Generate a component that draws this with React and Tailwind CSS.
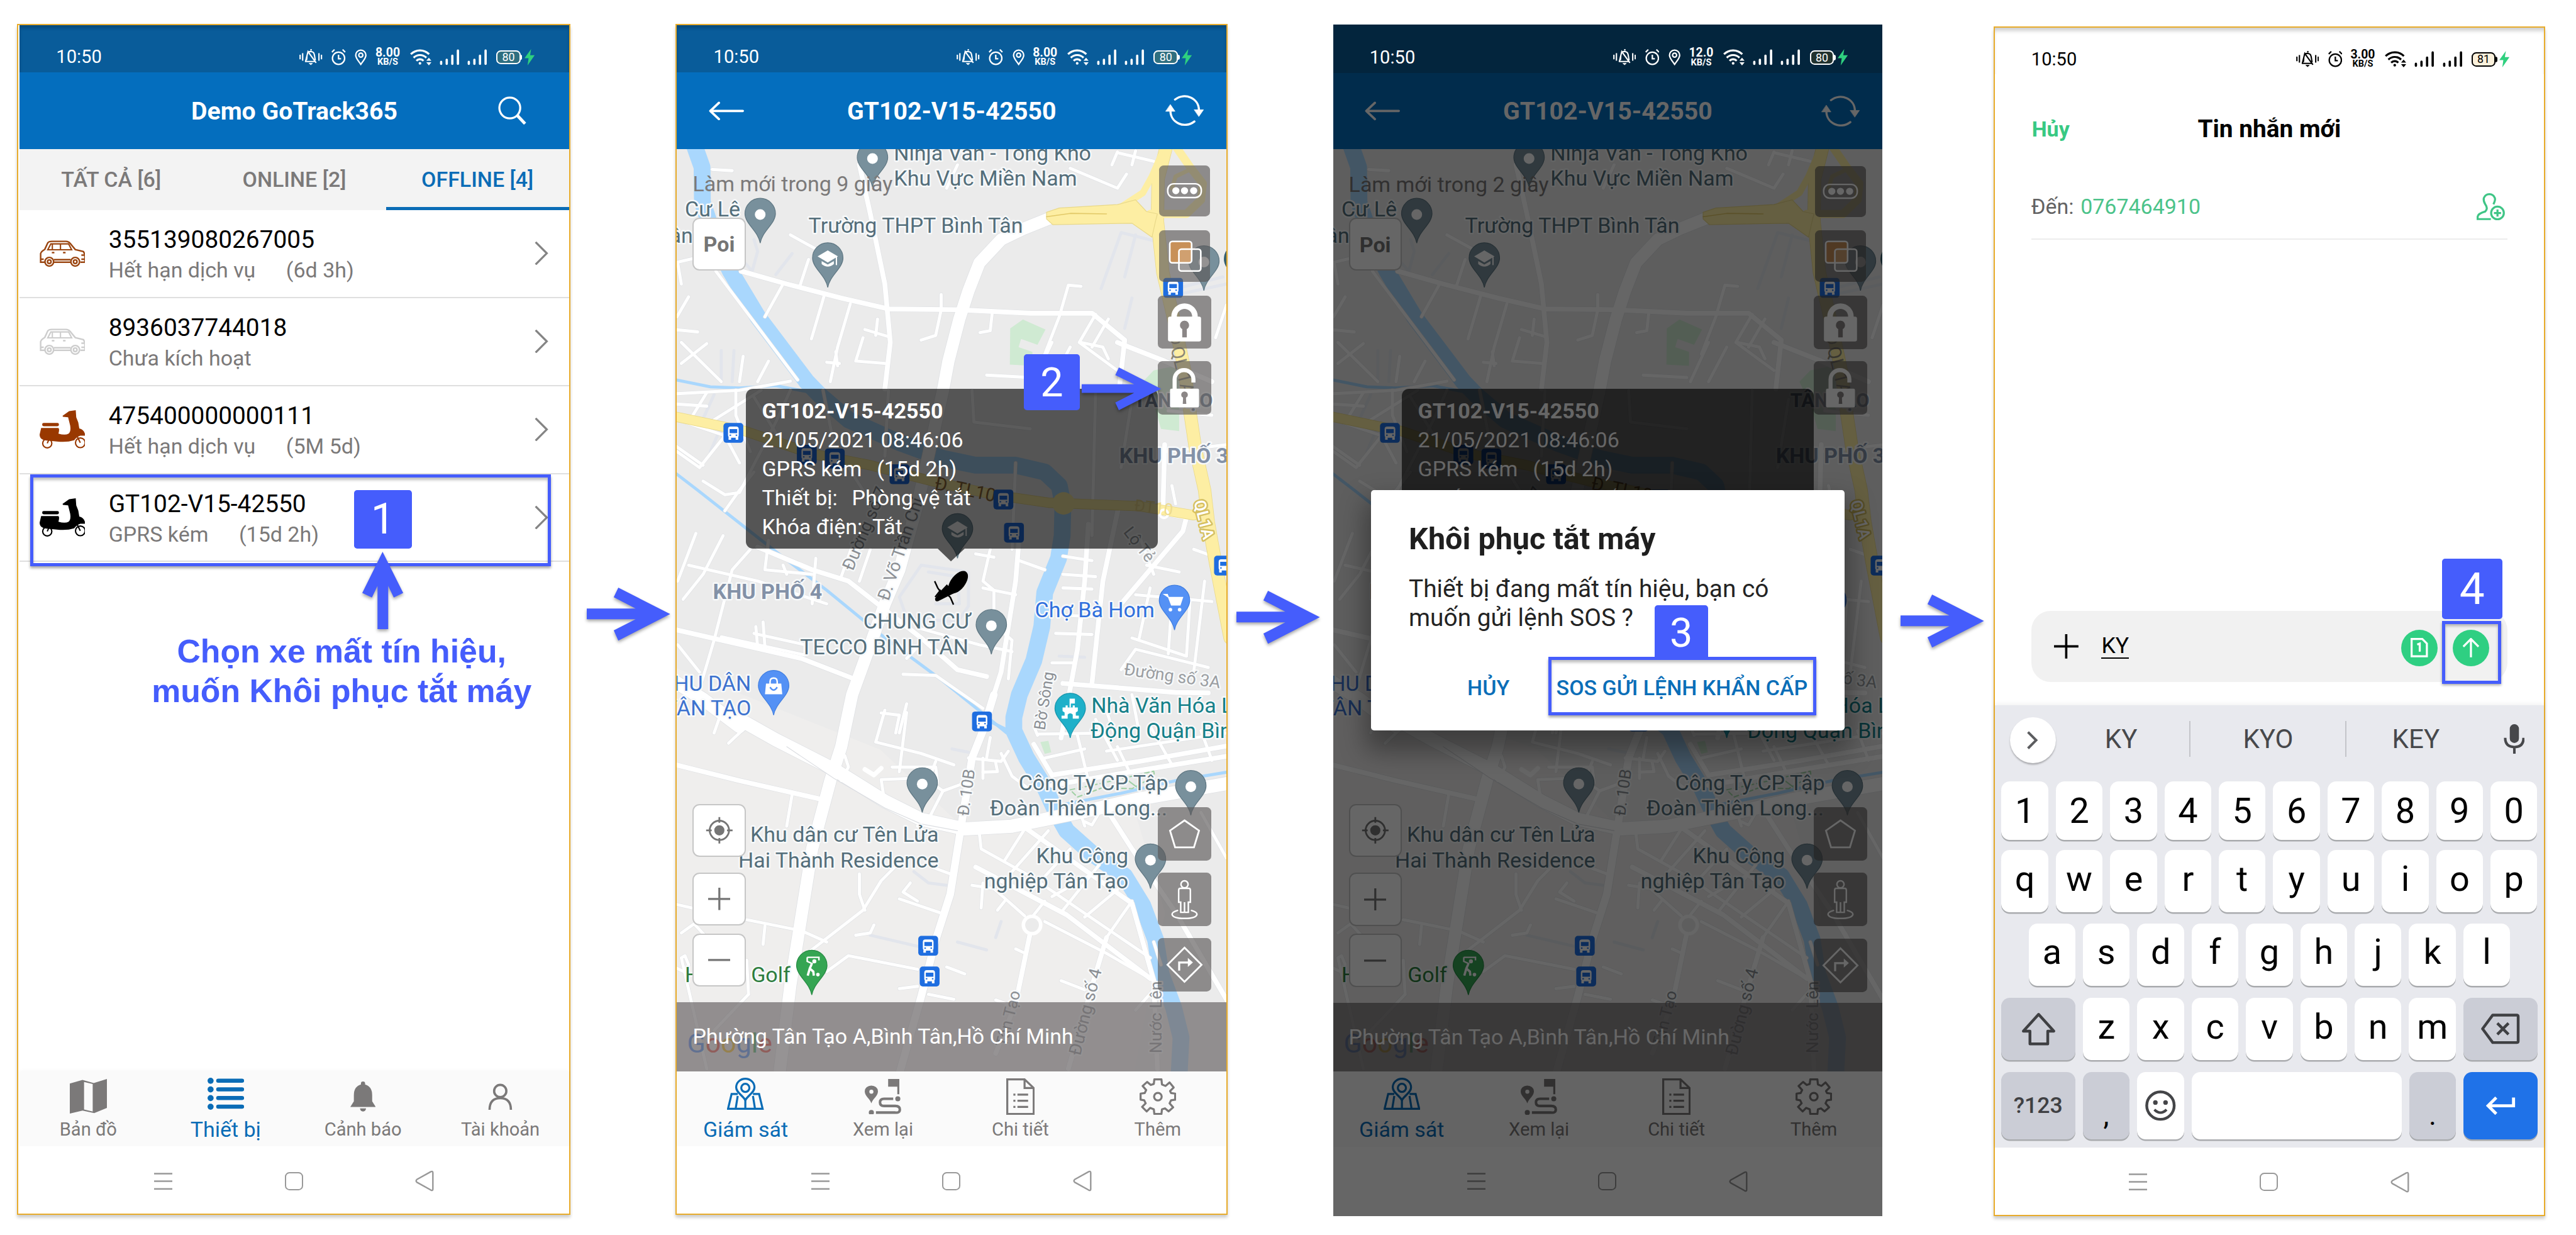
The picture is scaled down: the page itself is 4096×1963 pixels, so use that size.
import React from "react";

/* ---------- shared glyphs ---------- */

const ArrowRight = ({ className }) => (
  <svg className={className} width="164" height="106" viewBox="0 0 164 106" fill="#455dfc">
    <path d="M0 41H96L53 19L62 0L164 52L62 104L53 84L96 62H0Z" />
  </svg>
);

const Badge = ({ className, children }) => (
  <div className={"flex items-center justify-center rounded-[6px] bg-[#455dfc] text-white " + className}>{children}</div>
);

function StatusBar({ className, speed, level, pin = true, fill }) {
  return (
    <div className={"flex shrink-0 items-end " + className}>
      <div className="flex h-[60px] w-full items-center pl-[72px] pr-[68px]">
        <span className="text-[36px] leading-none">10:50</span>
        <svg className="ml-auto" width="45" height="32" viewBox="0 0 45 32" fill="none" stroke="currentColor" strokeWidth="2.6">
          <path d="M1.500 11v9M6.500 8v15M38.500 8v15M43.500 11v9" />
          <path d="M14 22c1-3 1-5 1-9M17.500 7c1.500-3 9-3 11 1s1.500 10 3 14M11 24.500H31M23 3V0M12 25L17 5L33 27" />
          <path d="M19 28h7l-3.500 3z" fill="currentColor" strokeWidth="1" />
        </svg>
        <svg className="ml-[18px]" width="28" height="32" viewBox="0 0 28 32" fill="none" stroke="currentColor" strokeWidth="2.8">
          <circle cx="14" cy="18" r="12" />
          <path d="M14 11v8h5M1 6l5-5M27 6l-5-5" />
        </svg>
        {pin && (
          <svg className="ml-[18px]" width="24" height="32" viewBox="0 0 24 32" fill="none" stroke="currentColor" strokeWidth="2.8">
            <path d="M12 30C8 24 2 18 2 12a10 10 0 0 1 20 0c0 6-6 12-10 18z" />
            <circle cx="12" cy="12" r="4" />
          </svg>
        )}
        <span className="ml-[16px] flex w-[49px] flex-col items-center font-bold">
          <span className="text-[24px] leading-[20px]">{speed}</span>
          <span className="text-[18px] leading-[17px]">KB/S</span>
        </span>
        <svg className="ml-[19px]" width="42" height="32" viewBox="0 0 42 32" fill="none" stroke="currentColor" strokeWidth="4">
          <path d="M1.500 10c10-10 26-10 36 0M7 17c7-7 18-7 25 0M12.500 23c4-4 10-4 14 0" />
          <circle cx="19.500" cy="28" r="2.600" fill="currentColor" stroke="none" />
          <path d="M32 23l5-6 5 6zM32 26l5 6 5-6z" fill="currentColor" stroke="none" />
        </svg>
        {[0, 1].map((i) => (
          <svg key={i} className="ml-[16px]" width="39" height="32" viewBox="0 0 39 32" stroke="currentColor" strokeWidth="4.500" strokeLinecap="round">
            <path d="M3 25v4M14 21v8M25 13v16M36 3v26" />
          </svg>
        ))}
        <span className={"ml-[18px] flex h-[28px] w-[48px] items-center justify-center rounded-[9px] border-[3px] border-current " + fill}>
          <span className="text-[22px] leading-none">{level}</span>
        </span>
        <span className="h-[11px] w-[3px] rounded-r bg-current" />
        <svg className="ml-[4px]" width="20" height="32" viewBox="0 0 20 32" fill="#2fd07f">
          <path d="M13 0L0 18h8L6 32L20 12H11z" />
        </svg>
      </div>
    </div>
  );
}

const SystemNav = () => (
  <div className="flex h-[132px] w-full shrink-0 items-center justify-center gap-[221px] pt-[4px] text-[#999]">
    <svg width="36" height="36" viewBox="0 0 36 36" stroke="currentColor" strokeWidth="3.200">
      <path d="M0 3h36M0 18h36M0 33h36" />
    </svg>
    <div className="h-[36px] w-[36px] rounded-[9px] border-[3px] border-current" />
    <svg width="38" height="42" viewBox="0 0 38 42" fill="none" stroke="currentColor" strokeWidth="3" strokeLinejoin="round">
      <path d="M31 3Q35 1 35 5V37Q35 41 31 39L4 24Q0 21 4 18Z" />
    </svg>
  </div>
);

const NavItem = ({ label, active, children }) => (
  <div className={"flex w-[270px] flex-col items-center pt-[13px] " + (active ? "text-[#0a6cb6]" : "text-[#7b7979]")}>
    <div className="flex h-[74px] items-center">{children}</div>
    <div className={"mt-[7px] leading-[40px] " + (active ? "text-[42px]" : "text-[36px]")}>{label}</div>
  </div>
);

const Chevron = () => (
  <svg className="ml-auto mr-[41px]" width="27" height="46" viewBox="0 0 27 46" fill="none" stroke="#848484" strokeWidth="4">
    <path d="M2 1L24 23L2 45" />
  </svg>
);

/* ---------- device list screen ---------- */

const Car = ({ color }) => (
  <svg width="90" height="52" viewBox="0 0 90 52" fill="none" stroke={color} strokeWidth="3">
    <path d="M10 43H2V26Q3 22 10 18L16 5Q18 2 24 2H52Q57 2 60 6L70 18L86 22Q89 26 89 34V43H80M28 43H61M28 38H61" />
    <path d="M16 18.500L22 7H57L63 18.500ZM41 7V18M25 7V18" strokeWidth="2.600" />
    <circle cx="19" cy="42" r="8.500" />
    <circle cx="19" cy="42" r="3.500" />
    <circle cx="70" cy="42" r="8.500" />
    <circle cx="70" cy="42" r="3.500" />
    <path d="M24 24h5M46 24h5M82 29h7M2 37h6M82 37h7" />
  </svg>
);

const Scooter = ({ color }) => (
  <svg width="90" height="76" viewBox="0 0 90 76" fill={color}>
    <path d="M45 11L58 2L71 0L72 14L76 24L78 36Q88 38 90 50L80 50Q72 53 68 59Q55 63 40 62L18 60Q0 60 0 48L3 35H36Q40 35 37 46Q50 50 57 46Q62 42 60 30L56 14L46 13Z" />
    <rect x="5" y="25" width="33" height="6.500" rx="3" />
    <g fill="none" stroke={color} strokeWidth="2.600">
      <circle cx="15" cy="65" r="9" />
      <circle cx="80" cy="64" r="9.500" />
      <path d="M15 65L19 56M80 64L74 52" />
    </g>
  </svg>
);

const devices = [
  { name: "355139080267005", state: "Hết hạn dịch vụ", time: "(6d 3h)", icon: <Car color="#9a4510" /> },
  { name: "8936037744018", state: "Chưa kích hoạt", time: "", icon: <Car color="#cdcdcd" /> },
  { name: "475400000000111", state: "Hết hạn dịch vụ", time: "(5M 5d)", icon: <Scooter color="#993800" /> },
  { name: "GT102-V15-42550", state: "GPRS kém", time: "(15d 2h)", icon: <Scooter color="#000" /> },
];

function ListScreen() {
  return (
    <div className="relative flex h-[2335px] w-[1080px] flex-col bg-white">
      <StatusBar className="h-[93px] bg-[#095c9a] text-white shadow-[inset_0_6px_6px_rgba(0,0,0,0.2)]" speed="8.00" level="80" fill="bg-[#2f6f80]" />
      <div className="flex h-[150px] shrink-0 items-center bg-[#046ebe] text-white">
        <div className="w-[230px]" />
        <div className="flex-1 whitespace-nowrap pt-[3px] text-center text-[48.500px] font-bold leading-none">Demo GoTrack365</div>
        <div className="flex w-[230px] justify-end pr-[84px]">
          <svg width="56" height="57" viewBox="0 0 56 57" fill="none" stroke="currentColor" strokeWidth="4">
            <circle cx="23" cy="23" r="20.500" />
            <path d="M38 38L53 54" strokeWidth="6" />
          </svg>
        </div>
      </div>
      <div className="flex h-[120px] shrink-0 bg-[#f3f3f3] text-[42px] font-medium leading-[120px] text-[#7b7979]">
        <div className="w-[360px] text-center">TẤT CẢ [6]</div>
        <div className="w-[360px] text-center">ONLINE [2]</div>
        <div className="w-[360px] border-b-[6.200px] border-[#0a6cb6] text-center text-[#0a6cb6]">OFFLINE [4]</div>
      </div>
      {devices.map((d) => (
        <div key={d.name} className="flex h-[173px] shrink-0 items-center border-b-[3px] border-[#dfdfdf] pl-[39px]">
          {d.icon}
          <div className="ml-[46px] pt-[6px] leading-[61px]">
            <div className="text-[48px] text-black">{d.name}</div>
            <div className="flex gap-[60px] text-[42px] text-[#7b7979]">
              <span>{d.state}</span>
              <span>{d.time}</span>
            </div>
          </div>
          <Chevron />
        </div>
      ))}
      <div className="grow" />
      <div className="flex h-[148px] shrink-0 bg-[#fafafa] shadow-[0_-3px_6px_rgba(0,0,0,0.03)]">
        <NavItem label="Bản đồ">
          <svg width="73" height="68" viewBox="0 0 73 68" fill="currentColor">
            <path fillRule="evenodd" d="M0 9L25 2L47 8L73 0V57L48 67L25 62L0 68ZM28 6V60L45 64V10Z" />
          </svg>
        </NavItem>
        <NavItem label="Thiết bị" active>
          <svg className="-mt-[10px]" width="72" height="64" viewBox="0 0 72 64" fill="currentColor">
            {[6, 23, 40, 57].map((y) => (
              <g key={y}>
                <circle cx="6" cy={y} r="6" />
                <rect x="17" y={y - 4} width="55" height="8" rx="4" />
              </g>
            ))}
          </svg>
        </NavItem>
        <NavItem label="Cảnh báo">
          <svg width="50" height="60" viewBox="0 0 50 60" fill="currentColor">
            <path d="M21 6Q20 0 25 0T29 6Q43 10 43 27V39L50 50H0L7 39V27Q7 10 21 6ZM19 53H31Q30 59 25 59T19 53Z" />
          </svg>
        </NavItem>
        <NavItem label="Tài khoản">
          <svg width="48" height="52" viewBox="0 0 48 52" fill="none" stroke="currentColor" strokeWidth="4.500">
            <circle cx="24" cy="15" r="12" />
            <path d="M3 52Q3 29 24 29T45 52" />
          </svg>
        </NavItem>
      </div>
      <SystemNav />

      <div className="absolute left-[21px] top-[883px] h-[180px] w-[1023px] border-[6.200px] border-[#455dfc] shadow-[0_5px_5px_rgba(0,0,0,0.35),inset_0_5px_5px_rgba(0,0,0,0.25)]" />
      <Badge className="absolute left-[657px] top-[914px] h-[115px] w-[114px] text-[84px]">1</Badge>
      <svg className="absolute left-[674px] top-[1034px] overflow-visible drop-shadow-[0_4px_3px_rgba(0,0,0,0.35)]" width="81" height="152" viewBox="0 0 81 152" fill="#455dfc">
        <path d="M40 0L80.500 81L62 90L51 67V152H30V67L19 90L0 81Z" />
      </svg>
      <div className="absolute left-[183px] top-[1192px] w-[900px] text-center font-['Liberation_Sans',Arial,sans-serif] text-[64px] font-bold leading-[77px] text-[#455dfc]">
        Chọn xe mất tín hiệu,
        <br />
        muốn Khôi phục tắt máy
      </div>
    </div>
  );
}

/* ---------- map ---------- */

/* The map is stored as three stacked sheets, each on its own grid. */
const SHEETS = {
  A: { kx: 1.4, ky: 2.178, ox: -19.5, oy: -263 },
  B: { kx: 1.4, ky: 2.24, ox: -19.5, oy: 447 },
  C: { kx: 1.4, ky: 2.24, ox: -19.5, oy: 1107 },
};
const at = (s, x, y) => {
  const g = SHEETS[s];
  return [Math.round((x / g.kx + g.ox) * 10) / 10, Math.round((y / g.ky + g.oy) * 10) / 10];
};
const line = (str) => {
  let sheet = "A";
  const out = [];
  const t = str.trim().split(/\s+/);
  for (let i = 0; i < t.length; ) {
    if (SHEETS[t[i]]) {
      sheet = t[i];
      i += 1;
    } else {
      out.push(at(sheet, +t[i], +t[i + 1]).join(","));
      i += 2;
    }
  }
  return out.join(" ");
};

const river =
  "A 72 540 97 650 98 800 130 950 175 1095 250 1290 385 1568 B 420 80 500 190 640 290 760 360 850 390 960 390 1040 420 1080 480 1090 560 1088 700 1078 800 1040 950 1032 1100 1010 1250 970 1400 955 1500 C 955 80 990 200 1040 330 1072 440 1100 520 1170 620 1260 720 1310 850 1345 1000 1360 1150 1395 1300 1415 1430 1410 1590";
const canals = [
  "B 28 15 120 45 200 50 300 40 400 70",
  "B 20 420 85 500 300 770 440 940 600 1150 760 1340 860 1470 935 1568",
  "C 890 40 935 75 960 90",
  "C 1090 405 1250 355 1400 300 1550 260",
];
const avenues = [
  ["A 1060 865 980 915 920 960 860 1060 830 1180 805 1300 775 1480 B 760 60 690 560 640 850 600 1000 560 1180 510 1400 C 480 150 450 300 400 600 370 900 340 1200 310 1590", 24],
  ["B 20 1340 100 1420 200 1540 C 200 30 300 120 460 250 600 390 700 470 820 512 950 500 1150 435 1300 380 1550 310", 26],
  ["B 900 1400 C 870 80 840 200 810 500 780 800 740 1000 700 1250 640 1590", 15],
];
const roads = [
  "A 530 640 560 850 600 1150 615 1400 600 1600",
  "A 205 1095 330 1150 480 1210 610 1257 800 1260 1000 1275 1170 1275 1260 1390 1245 1600",
  "A 1240 1400 1370 1480 1500 1568",
  "B 250 750 400 850 500 900 580 1000 700 1150 800 1290 880 1320",
  "B 20 1112 150 1160 370 1240 515 1330",
  "B 970 700 960 900 920 1300 890 1450",
  "B 1160 650 1150 900 1130 1200 1085 1590",
  "B 1245 560 1200 900 1170 1350",
  "B 1370 300 1365 600 1430 620 1420 680 1250 1000",
  "C 20 228 200 300 420 380",
  "C 1060 275 1300 215 1550 145",
  "C 1060 320 1300 255 1550 190",
  "C 1010 140 1060 275",
  "C 980 500 1280 840 1340 1180 1350 1568",
  "C 850 680 1100 890 1330 1170",
  "C 1000 970 960 1280 905 1500",
  "C 1210 990 1180 1150 1105 1568",
  "C 1220 450 1280 600 1400 880 1550 1290",
  "B 1090 1350 1400 1390 1490 1392",
];
const lanes = [
  "A 320 1150 270 1290", "A 435 1190 398 1385", "A 505 1235 470 1420 450 1568", "A 755 1195 755 1260 740 1370 700 1390",
  "A 895 1280 890 1350 862 1358", "A 1140 1160 1105 1155 1080 1290 1040 1450", "A 340 940 410 1000", "A 390 1045 365 1165",
  "A 20 1060 75 1040", "A 60 1205 28 1290", "A 20 1345 85 1355", "A 40 1400 150 1568", "A 110 1405 40 1490", "A 40 1150 30 1060",
  "A 135 1095 360 1560", "A 580 1300 575 1370", "A 545 1345 610 1375", "A 540 1380 520 1480 600 1490", "A 465 1440 470 1500", "A 440 1485 475 1490",
  "A 1140 1400 1200 1420 1215 1470", "A 1180 1280 1135 1400 1240 1520", "A 1215 1300 1170 1420", "A 880 1540 1000 1550", "A 1060 1400 1010 1568",
  "A 1110 1420 1060 1568", "A 1110 655 1240 740 1265 680", "A 1245 590 1340 625", "A 1240 585 1225 640", "A 1290 580 1280 640", "A 125 660 180 665",
  "A 280 1480 250 1568", "A 210 1460 200 1568", "A 800 640 770 740", "A 1540 1240 1510 1380",
  "B 28 75 200 60 340 20", "B 190 60 190 170 230 330", "B 20 300 100 390", "B 175 230 90 400 28 330", "B 110 70 60 200", "B 260 60 130 190",
  "B 100 460 160 520 200 510 300 200 340 60", "B 160 590 200 500 240 420", "B 240 90 320 300", "B 50 200 160 260 200 380", "B 20 120 110 130",
  "B 80 690 30 900", "B 155 700 100 870 45 980", "B 60 830 250 900 440 1000", "B 230 760 180 850 130 1160 80 1430", "B 400 1000 410 800",
  "B 280 720 270 850 400 870", "B 150 1145 380 1225 380 1180 240 1130", "B 245 1100 250 1190", "B 265 1080 270 1190", "B 30 1180 90 1300",
  "B 520 700 480 880", "B 560 760 530 900", "B 330 870 320 830",
  "B 890 760 870 900 900 940 900 1090 950 1160 940 1330", "B 850 780 900 795", "B 870 930 960 960", "B 700 1110 860 1180 950 1210",
  "B 650 1310 740 1315 870 1460", "B 740 1210 800 1290", "B 690 1190 660 1240", "B 590 1480 640 1490 630 1568", "B 660 1440 640 1568",
  "B 1090 790 1170 810", "B 1090 870 1180 880", "B 1090 930 1170 935", "B 1080 1050 1170 1055", "B 1070 1130 1170 1135", "B 1060 1260 1120 1260",
  "B 1320 830 1410 860", "B 1280 1150 1430 1230", "B 1330 930 1300 1150", "B 1390 980 1380 1220", "B 1440 980 1430 1230", "B 1290 960 1500 990",
  "B 1300 700 1340 870", "B 970 810 1040 850", "B 1250 1290 1290 1200 1490 1280", "B 1200 1420 1230 1568", "B 1280 1400 1300 1568",
  "B 430 60 460 300 540 500", "B 840 60 845 200 1000 230", "B 1180 60 1170 700", "B 1280 100 1250 400", "B 960 380 950 760", "B 610 60 600 350",
  "B 1380 150 1500 170", "B 1370 330 1540 300", "B 1400 560 1390 480", "B 1450 760 1520 800", "B 1480 900 1450 1300",
  "C 345 360 330 500", "C 130 90 150 0", "C 170 135 220 60", "C 490 190 500 240 480 300", "C 600 -10 575 130 700 180 790 230", "C 660 0 640 260",
  "C 620 240 740 240 745 310", "C 600 400 590 295 665 290", "C 740 215 720 300 760 345 720 470 690 500", "C 760 345 820 310",
  "C 830 200 920 215 940 170", "C 870 200 870 290", "C 905 220 910 260 870 262", "C 890 110 880 200", "C 920 180 950 280 1000 340",
  "C 860 530 865 600 1000 720 1330 1080", "C 840 760 900 775 985 895", "C 990 500 930 650", "C 1050 520 950 700", "C 1110 600 1000 790",
  "C 1190 670 1090 870", "C 1280 830 1210 990", "C 870 750 865 860", "C 930 830 910 870", "C 1160 720 1060 810", "C 1240 780 1150 900",
  "C 1040 920 1210 1060 1340 1180", "C 1000 910 1040 830", "C 960 1040 980 1055", "C 905 1265 950 1290", "C 1085 1180 1150 1220", "C 1290 1310 1340 1220",
  "C 1020 95 1210 90", "C 1130 100 1160 300", "C 1240 150 1270 250", "C 1330 60 1390 230", "C 1040 200 1150 160", "C 1180 30 1240 210", "C 1020 100 1010 60",
  "C 1210 170 1540 90", "C 1470 80 1500 210", "C 1150 480 1170 495 1190 440", "C 1470 440 1540 640",
  "C 220 912 370 960 440 1010", "C 270 940 265 1020", "C 20 842 75 862", "C 40 970 75 930 110 990", "C 370 1080 540 870 590 740 640 660",
  "C 530 710 530 800 545 870", "C 440 1140 500 1070 690 1130", "C 770 1120 820 1150", "C 640 1215 690 1205", "C 720 1240 790 1262",
  "C 520 980 560 970 570 935", "C 640 820 750 880", "C 670 750 650 790 690 830", "C 730 680 780 710", "C 60 1110 50 1070 40 1080 110 1568", "C 225 1240 130 1400",
  "C 220 1090 225 1240", "C 60 1150 20 1120", "C 330 1370 360 1420", "C 1150 500 1140 450", "C 1420 930 1440 980", "C 1360 1110 1340 1010",
];
const faint = [
  "A 1340 965 1250 930 1195 1170", "A 1290 940 1260 1120", "A 240 960 250 1010 235 1095 215 1060", "A 345 1020 300 1110", "A 150 1435 150 1568", "A 185 1435 180 1568",
  "A 1280 1210 1260 1340", "A 1420 1190 1540 1150", "A 1400 1170 1530 1120",
  "B 700 830 830 860 830 1010 800 1080 660 1060 640 970 700 830", "B 720 860 800 880 805 1000 740 1000", "B 130 80 90 220", "B 150 220 120 330",
  "C 560 980 720 1040", "C 800 1010 880 1045", "C 680 700 720 750 770 760", "C 785 160 830 175", "C 920 920 905 990", "B 1080 1230 1150 1235",
];

const pinPath = "M0 0C-4 -24 -30 -38 -30 -58A30 30 0 0 1 30 -58C30 -38 4 -24 0 0Z";
function Pin({ p, fill, edge, children }) {
  const [x, y] = at(...p);
  return (
    <g transform={`translate(${x} ${y})`}>
      <path d={pinPath} fill={fill} stroke={edge} strokeWidth="1.500" />
      {children || <circle cx="0" cy="-56" r="10.500" fill="#fff" />}
    </g>
  );
}
const Cap = () => (
  <g fill="#fff">
    <path d="M0 -73L20 -61L0 -49L-20 -61ZM-12 -52V-46Q0 -36 12 -46V-52L0 -45Z" />
    <path d="M17 -61V-44" stroke="#fff" strokeWidth="2.500" />
  </g>
);
function Bus({ p }) {
  const [x, y] = at(...p);
  return (
    <g transform={`translate(${x} ${y})`}>
      <rect width="39" height="39" rx="6" fill="#1f6ee0" />
      <rect x="9" y="7" width="21" height="22" rx="5" fill="#fff" />
      <path d="M12 12h15v8H12z" fill="#1f6ee0" />
      <path d="M10 28h5v5h-5zM24 28h5v5h-5z" fill="#fff" />
      <path d="M12 24h3M24 24h3" stroke="#1f6ee0" strokeWidth="2.500" />
    </g>
  );
}
function Label({ p, children, size = 42, fill = "#546e7a", rot = 0, anchor = "start", weight = 400, halo = "#f7f9fa", ls = 0 }) {
  const [x, y] = at(...p);
  return (
    <text transform={`translate(${x} ${y}) rotate(${rot})`} fontSize={size} fill={fill} textAnchor={anchor} fontWeight={weight} letterSpacing={ls} stroke={halo} strokeWidth={halo === "none" ? 0 : 6} strokeLinejoin="round" paintOrder="stroke">
      {children}
    </text>
  );
}
const slate = { fill: "#78909c", edge: "#5f7783" };
const yellow = "#fdeea3";

const MapCanvas = () => (
  <svg className="block" width="1080" height="1812" viewBox="0 0 1080 1812" fontFamily="Roboto, sans-serif">
    <rect width="1080" height="1812" fill="#ebebeb" />
    <path d="M0 1020L400 1180L560 1330L900 1300L960 1500L900 1812H0Z" fill="#efeeed" />
    <g fill="#cfead2">
      <polygon points={line("A 945 1340 980 1302 1042 1345 1020 1410 975 1385 968 1420 1006 1440 1006 1500 944 1495")} />
      <polygon points={line("A 1310 1568 1340 1520 1400 1500 1410 1568 B 1410 240 1360 230 1340 120")} />
      <polygon points={line("C 1028 130 1050 124 1058 175 1040 182")} />
    </g>
    <g fill="none" strokeLinejoin="round" strokeLinecap="round">
      {faint.map((d) => <polyline key={d} points={line(d)} stroke="#e2e5ec" strokeWidth="6" />)}
      <polyline points={line(river)} stroke="#a9d7fd" strokeWidth="33" />
      {canals.map((d) => <polyline key={d} points={line(d)} stroke="#a9d7fd" strokeWidth="6" />)}
      <g stroke="#dfe1e4">
        {lanes.map((d) => <polyline key={d} points={line(d)} strokeWidth="7.500" />)}
        {roads.map((d) => <polyline key={d} points={line(d)} strokeWidth="11" />)}
        {avenues.map(([d, w]) => <polyline key={d} points={line(d)} strokeWidth={w + 2} />)}
      </g>
      <g stroke="#fff">
        {lanes.map((d) => <polyline key={d} points={line(d)} strokeWidth="6" />)}
        {roads.map((d) => <polyline key={d} points={line(d)} strokeWidth="9.500" />)}
        {avenues.map(([d, w]) => <polyline key={d} points={line(d)} strokeWidth={w} />)}
      </g>
      <polyline points={line("C 330 150 460 290 600 420 700 490 800 520")} stroke="#dcdee2" strokeWidth="1.500" />
      <circle cx={at("C", 1005, 935)[0]} cy={at("C", 1005, 935)[1]} r="17" fill="#ebebeb" stroke="#fff" strokeWidth="7" />
      <polyline points={line("C 545 250 570 275 590 245")} stroke="#fff" strokeWidth="9" />
      <g stroke="#e9d98a">
        <polyline points={line("B 20 175 215 240 400 340 560 390 730 460 900 520 1050 555 1300 570 1450 610")} strokeWidth="20" />
        <polyline points={line("A 1375 560 1352 700 1350 880 1365 1100 1395 1300 1425 1520 B 1440 160 1455 320 1480 500 1490 640 1510 820 1550 1150")} strokeWidth="26" />
      </g>
      <g stroke={yellow}>
        <polyline points={line("B 20 175 215 240 400 340 560 390 730 460 900 520 1050 555 1300 570 1450 610")} strokeWidth="18" />
        <polyline points={line("A 1375 560 1352 700 1350 880 1365 1100 1395 1300 1425 1520 B 1440 160 1455 320 1480 500 1490 640 1510 820 1550 1150")} strokeWidth="24" />
        <polyline points={line("A 1400 560 1440 650 1475 720 1470 790 1430 850 1330 850")} strokeWidth="16" />
        <polyline points={line("A 1440 660 1400 690 1390 740")} strokeWidth="8" />
        <polyline points={line("A 1250 820 1310 760 1335 690 1360 600")} strokeWidth="13" />
      </g>
      <polygon points={line("A 1045 843 1080 825 1240 810 1290 790 1320 840 1350 850 1345 880 1335 950 1280 890 1062 896 1045 872")} fill={yellow} stroke="#e9d98a" strokeWidth="1.500" />
      <polyline points={line("A 1045 862 1110 848 1210 850")} stroke="#e2c968" strokeWidth="2" />
      <circle cx={at("B", 1092, 558)[0]} cy={at("B", 1092, 558)[1]} r="22" fill={yellow} />
      <polygon points={line("B 1430 600 1500 580 1500 660")} fill={yellow} />
      <circle cx={at("B", 1368, 604)[0]} cy={at("B", 1368, 604)[1]} r="8" stroke="#fff" strokeWidth="5" />
      <polygon points={line("C 1110 340 1200 310 1340 258 1342 280 1280 335 1200 330 1130 372")} stroke="#9fd0a4" strokeWidth="2.500" strokeDasharray="9 6" />
      <polyline points={line("C 1270 300 1295 330")} stroke="#9fd0a4" strokeWidth="2.500" />
    </g>

    <Label p={["A", 1383, 1372]} size={30} rot={78} fill="#8c8778" halo="none">Đ</Label>
    <Label p={["A", 1386, 1425]} size={36} rot={76} fill="#8a8676" halo="none">QL 1A</Label>
    <Label p={["B", 1285, 135]} weight={700} size={38} fill="#7a8699">TÂN TẠO</Label>
    <Label p={["B", 735, 495]} size={36} rot={12} fill="#8d6a3a" halo="none">Đ. TL10</Label>
    <Label p={["B", 1285, 590]} size={32} rot={7} fill="#eddb8e" halo="none">ĐT10</Label>
    <Label p={["B", 512, 858]} size={34} rot={-67} fill="#8b8f94">Đường số 7</Label>
    <Label p={["B", 610, 990]} size={34} rot={-71} fill="#8b8f94">Đ. Võ Trần Chí</Label>
    <Label p={["B", 1450, 550]} size={32} rot={76} fill="#fff" halo="#d5bf60" weight={500}>QL1A</Label>
    <Label p={["B", 1255, 685]} size={32} rot={52} fill="#9a9da1">Lộ Tẻ</Label>
    <Label p={["B", 1257, 1312]} size={33} rot={8} fill="#9a9da1">Đường số 3A</Label>
    <Label p={["B", 1040, 1558]} size={31} rot={-81} fill="#8b8f94">Bờ Sông</Label>
    <Label p={["C", 830, 457]} size={32} rot={-82} fill="#8b8f94">Đ. 10B</Label>
    <Label p={["C", 935, 1475]} size={32} rot={-76} fill="#8b8f94">Tân Tạo</Label>
    <Label p={["C", 1138, 1512]} size={34} rot={-76} fill="#8b8f94">Đường số 4</Label>
    <Label p={["C", 1362, 1500]} size={33} rot={-90} fill="#8b8f94">Nước Lên</Label>

    <Bus p={["A", 1366, 1124]} />
    <Bus p={["B", 156, 204]} />
    <Bus p={["B", 358, 300]} />
    <Bus p={["B", 435, 317]} />
    <Bus p={["B", 613, 386]} />
    <Bus p={["B", 899, 497]} />
    <Bus p={["B", 928, 643]} />
    <Bus p={["B", 1506, 788]} />
    <Bus p={["B", 840, 1474]} />
    <Bus p={["C", 692, 983]} />
    <Bus p={["C", 696, 1118]} />

    <Pin p={["A", 566, 735]} {...slate} />
    <Pin p={["A", 257, 975]} {...slate} />
    <Pin p={["A", 443, 1165]} {...slate}><Cap /></Pin>
    <Pin p={["A", 1478, 1178]} {...slate} />
    <Pin p={["A", 1576, 1170]} fill="#37606f" edge="#37606f" />
    <Pin p={["B", 800, 800]} {...slate}><Cap /></Pin>
    <Pin p={["B", 893, 1222]} {...slate} />
    <Pin p={["C", 703, 440]} {...slate} />
    <Pin p={["C", 1442, 452]} {...slate} />
    <Pin p={["C", 1331, 775]} {...slate} />
    <Pin p={["B", 1397, 1115]} fill="#5491f5" edge="#3f7de0">
      <path d="M-20 -70H-14L-6 -49H11L16 -64H-11Z" fill="#fff" stroke="#fff" strokeWidth="2" />
      <circle cx="-8" cy="-40" r="3.500" fill="#fff" />
      <circle cx="10" cy="-40" r="3.500" fill="#fff" />
    </Pin>
    <Pin p={["B", 294, 1490]} fill="#5491f5" edge="#3f7de0">
      <path d="M-15 -62H15L17 -41H-17Z" fill="#fff" />
      <path d="M-7 -60V-66Q-7 -73 0 -73T7 -66V-60" fill="none" stroke="#fff" strokeWidth="3" />
      <path d="M-7 -55Q0 -44 7 -55" fill="none" stroke="#5491f5" strokeWidth="3" />
    </Pin>
    <Pin p={["C", 1110, 112]} fill="#1fb0c9" edge="#1694ab">
      <path d="M-15 -60H-9V-64H-5V-60H5V-64H9V-60H15V-53L11 -50V-44H17V-38H5V-46Q0 -51 -5 -46V-38H-17V-44H-11V-50L-15 -53Z" fill="#fff" />
      <path d="M0 -60V-76H8V-69H0" fill="#fff" stroke="#fff" strokeWidth="2.500" />
    </Pin>
    <Pin p={["C", 399, 1243]} fill="#35a553" edge="#258a42">
      <path d="M-9 -74H14V-68" fill="none" stroke="#fff" strokeWidth="3" />
      <path d="M-9 -74V-66L2 -61" fill="none" stroke="#fff" strokeWidth="3" />
      <circle cx="5" cy="-66" r="4" fill="#fff" />
      <path d="M0 -61L-4 -52L-8 -38M-4 -52L3 -46L4 -38" fill="none" stroke="#fff" strokeWidth="4.500" />
      <circle cx="12" cy="-40" r="3.500" fill="#fff" />
    </Pin>

    <Label p={["A", 625, 622]}>Ninja Van - Tổng Kho</Label>
    <Label p={["A", 625, 730]}>Khu Vực Miền Nam</Label>
    <Label p={["A", 50, 862]}>Cư Lê</Label>
    <Label p={["A", 72, 975]} anchor="end">Tân</Label>
    <Label p={["A", 390, 930]}>Trường THPT Bình Tân</Label>
    <Label p={["B", 1245, 380]} fill="#8391a7" weight={700}>KHU PHỐ 3</Label>
    <Label p={["B", 127, 978]} fill="#8391a7" weight={700}>KHU PHỐ 4</Label>
    <Label p={["B", 835, 1110]} anchor="end">CHUNG CƯ</Label>
    <Label p={["B", 830, 1222]} anchor="end">TECCO BÌNH TÂN</Label>
    <Label p={["B", 1013, 1060]} fill="#2f6fdd">Chợ Bà Hom</Label>
    <Label p={["B", 232, 1382]} fill="#3c72cf" anchor="end">KHU DÂN</Label>
    <Label p={["B", 232, 1490]} fill="#3c72cf" anchor="end">TÂN TẠO</Label>
    <Label p={["B", 1168, 1480]} fill="#158089">Nhà Văn Hóa Lao</Label>
    <Label p={["C", 1166, 112]} fill="#158089">Động Quận Bình</Label>
    <Label p={["C", 1380, 343]} anchor="end">Công Ty CP Tập</Label>
    <Label p={["C", 1377, 452]} anchor="end">Đoàn Thiên Long...</Label>
    <Label p={["C", 748, 570]} anchor="end">Khu dân cư Tên Lửa</Label>
    <Label p={["C", 748, 682]} anchor="end">Hai Thành Residence</Label>
    <Label p={["C", 1270, 662]} anchor="end">Khu Công</Label>
    <Label p={["C", 1270, 775]} anchor="end">nghiệp Tân Tạo</Label>
    <Label p={["C", 50, 1187]} fill="#2d7d3d">H</Label>
    <Label p={["C", 340, 1187]} fill="#2d7d3d" anchor="end">Golf</Label>
    <Label p={["C", 56, 1497]} size={53} halo="none">
      <tspan fill="#4285f4">G</tspan>
      <tspan fill="#ea4335">o</tspan>
      <tspan fill="#fbbc05">o</tspan>
      <tspan fill="#4285f4">g</tspan>
      <tspan fill="#34a853">l</tspan>
      <tspan fill="#ea4335">e</tspan>
    </Label>
    <g fill="#000">
      <ellipse cx="553" cy="851" rx="26" ry="14" transform="rotate(-52 553 851)" />
      <path d="M531 855L546 872L530 880L514 888Q507 890 508 883L516 871Z" />
      <path d="M507 849L513 862L523 876M529 872L538 881L544 895M519 866L508 880" fill="none" stroke="#000" strokeWidth="3" />
    </g>
  </svg>
);

const Tool = ({ children, className = "h-[105px] w-[105px]" }) => (
  <div className={"rounded-[9px] bg-[#5b5757]/65 " + className}>{children}</div>
);
const Zoom = ({ children, className = "" }) => (
  <div className={"flex h-[104px] w-[104px] items-center justify-center rounded-[14px] border-[2.500px] border-[#c6c6c6] bg-white text-[#757575] " + className}>{children}</div>
);

function MapView({ seconds }) {
  return (
    <div className="relative h-[1812px] w-[1080px] shrink-0 overflow-hidden">
      <MapCanvas />
      <div className="absolute left-[31px] top-[44px] text-[42px] leading-[50px] text-[#7b7979]">Làm mới trong {seconds} giây</div>
      <Zoom className="absolute left-[31px] top-[135px] pt-[2px] text-[42px] font-bold">Poi</Zoom>

      <div className="absolute left-[945px] top-[33px] flex flex-col items-center gap-[27px]">
        <Tool className="h-[100px] w-[100px]">
          <svg width="100" height="100" viewBox="0 0 100 100" fill="#fff">
            <rect x="17" y="36" width="66" height="27" rx="12" fill="none" stroke="#fff" strokeWidth="3" />
            <circle cx="33" cy="49.500" r="7" />
            <circle cx="50" cy="49.500" r="7" />
            <circle cx="68" cy="49.500" r="7" />
          </svg>
        </Tool>
        <Tool className="h-[101px] w-[100px]">
          <svg width="100" height="100" viewBox="0 0 100 100" stroke="#fff" strokeWidth="3.200">
            <rect x="21" y="22" width="43" height="42" rx="5" fill="#c89058" />
            <rect x="39" y="37" width="43" height="43" rx="5" fill="#fff" fillOpacity="0.150" />
          </svg>
        </Tool>
        <Tool>
          <svg width="105" height="105" viewBox="0 0 105 105">
            <path d="M32 45V41A20.500 20.500 0 0 1 73 41V45" fill="none" stroke="#fff" strokeWidth="11" />
            <rect x="20" y="41" width="65" height="49" rx="4" fill="#fff" />
            <path d="M52.500 49A9 9 0 0 1 57 65V82H48V65A9 9 0 0 1 52.500 49Z" fill="#8b8686" />
            <circle cx="52.500" cy="58" r="9" fill="#8b8686" />
          </svg>
        </Tool>
        <Tool className="-mt-[3px] h-[105px] w-[105px]">
          <svg width="105" height="105" viewBox="0 0 105 105">
            <path d="M33 55V36A18 18 0 0 1 70 36V42" fill="none" stroke="#fff" strokeWidth="8" />
            <rect x="24" y="54" width="57" height="37" rx="3" fill="#fff" />
            <path d="M50 66H55L56 84H49Z" fill="#8b8686" />
            <circle cx="52.500" cy="66" r="6.500" fill="#8b8686" />
          </svg>
        </Tool>
      </div>

      <div className="absolute left-[945px] top-[1293px] flex flex-col gap-[24px]">
        <Tool>
          <svg width="105" height="105" viewBox="0 0 105 105" fill="none" stroke="#fff" strokeWidth="3.500">
            <path d="M52.500 26L81 46L71 79H34L24 46Z" />
          </svg>
        </Tool>
        <Tool>
          <svg width="105" height="105" viewBox="0 0 105 105" fill="none" stroke="#fff" strokeWidth="3">
            <circle cx="52.500" cy="23" r="7" />
            <path d="M44 31H61Q64 31 64 35V58H60V78H45V58H41V35Q41 31 44 31ZM52.500 58V78" />
            <path d="M40 74Q28 77 28 82Q30 90 52.500 90T77 82Q77 77 65 74" />
          </svg>
        </Tool>
        <Tool>
          <svg width="105" height="105" viewBox="0 0 105 105" fill="none" stroke="#fff" strokeWidth="3.500">
            <path d="M52.500 19L86 52.500L52.500 86L19 52.500Z" />
            <path d="M42 64V48H60" strokeWidth="4" />
            <path d="M59 39L69 48L59 57Z" fill="#fff" strokeWidth="0" />
          </svg>
        </Tool>
      </div>

      <div className="absolute left-[31px] top-[1287px] flex flex-col">
        <Zoom>
          <svg width="54" height="54" viewBox="0 0 54 54" fill="none" stroke="currentColor" strokeWidth="3.500">
            <circle cx="27" cy="27" r="19" />
            <circle cx="27" cy="27" r="10" fill="currentColor" stroke="none" />
            <path d="M27 1V12M27 42V53M1 27H12M42 27H53" />
          </svg>
        </Zoom>
        <Zoom className="mt-[31px]">
          <svg width="44" height="44" viewBox="0 0 44 44" stroke="currentColor" strokeWidth="4"><path d="M0 22H44M22 0V44" /></svg>
        </Zoom>
        <Zoom className="mt-[16px]">
          <svg width="44" height="44" viewBox="0 0 44 44" stroke="currentColor" strokeWidth="4"><path d="M0 22H44" /></svg>
        </Zoom>
      </div>

      <div className="absolute left-[135px] top-[471px] h-[315px] w-[810px] rounded-[14px] bg-black/64 pl-[32px] pt-[15px] text-[42px] leading-[57px] text-white">
        <div className="font-bold">GT102-V15-42550</div>
        <div>21/05/2021 08:46:06</div>
        <div className="flex"><span className="w-[226px]">GPRS kém</span><span>(15d 2h)</span></div>
        <div className="flex"><span className="w-[177px]">Thiết bị:</span><span>Phòng vệ tắt</span></div>
        <div className="flex"><span className="w-[217px]">Khóa điện:</span><span>Tắt</span></div>
      </div>
      <svg className="absolute left-[513px] top-[786px]" width="53" height="25" viewBox="0 0 53 25"><path d="M0 0H53L26 25Z" fill="#000" fillOpacity="0.640" /></svg>

      <div className="absolute bottom-0 left-0 flex h-[135px] w-[1080px] items-center bg-[#6d6a6b]/72 pl-[31px] text-[42px] text-white">
        Phường Tân Tạo A,Bình Tân,Hồ Chí Minh
      </div>
    </div>
  );
}

function TrackScreen({ seconds, bar, speed, fill }) {
  return (
    <>
      <StatusBar className={bar} speed={speed} level="80" fill={fill} />
      <div className="flex h-[150px] shrink-0 items-center bg-[#046ebe] text-white">
        <div className="w-[230px] pl-[63px]">
          <svg width="70" height="38" viewBox="0 0 70 38" fill="none" stroke="currentColor" strokeWidth="4.500" strokeLinecap="round" strokeLinejoin="round">
            <path d="M20 3L3 19L20 35M3 19H67" />
          </svg>
        </div>
        <div className="flex-1 whitespace-nowrap pt-[3px] text-center text-[48.500px] font-bold leading-none">GT102-V15-42550</div>
        <div className="flex w-[230px] justify-end pr-[44px]">
          <svg width="76" height="61" viewBox="0 0 76 61" fill="none" stroke="currentColor" strokeWidth="4.200" strokeLinecap="round">
            <path d="M19 9C38 -6 66 6 66 30M57 52C38 67 10 55 10 31" />
            <path d="M57 29H75L66 42ZM1 32H19L10 19Z" fill="currentColor" strokeWidth="1" />
          </svg>
        </div>
      </div>
      <MapView seconds={seconds} />
      <div className="flex h-[148px] shrink-0 bg-[#fafafa]">
        <NavItem label="Giám sát" active>
          <svg className="-mt-[10px]" width="72" height="64" viewBox="0 0 72 64" fill="none" stroke="currentColor" strokeWidth="4">
            <path d="M36 44C29 33 18 29 18 19a18 17 0 0 1 36 0C54 29 43 33 36 44Z" />
            <circle cx="36" cy="20" r="8" />
            <path d="M21 32H9L2 61H70L63 32H51M21 36L17 61M36 44V61M51 36L55 61" />
          </svg>
        </NavItem>
        <NavItem label="Xem lại">
          <svg width="72" height="70" viewBox="0 0 72 70" fill="currentColor">
            <path fillRule="evenodd" d="M13 48C10 38 0 34 0 24A13 11 0 0 1 26 24C26 34 16 38 13 48ZM13 21a4 4 0 1 0 .1 8a4 4 0 1 0-.1-8Z" />
            <path d="M46 0H68V30H64V15H46Z" />
            <circle cx="65" cy="39" r="5" />
            <circle cx="13" cy="66" r="5" />
            <path d="M56 39H38Q30 39 30 46T38 53H60Q69 53 69 60T60 66H22" fill="none" stroke="currentColor" strokeWidth="5" />
          </svg>
        </NavItem>
        <NavItem label="Chi tiết">
          <svg width="56" height="72" viewBox="0 0 56 72" fill="none" stroke="currentColor" strokeWidth="4">
            <path d="M2 2H36L54 19V70H2ZM36 2V19H54M22 32H43M22 44H43M22 56H43M14 32H18M14 44H18M14 56H18" />
          </svg>
        </NavItem>
        <NavItem label="Thêm">
          <svg width="72" height="72" viewBox="0 0 72 72" fill="none" stroke="currentColor" strokeWidth="4" strokeLinejoin="round">
            <path d="M29 2H43L44 12L51 15L59 8L67 18L60 25L62 29L70 30V42L62 43L59 49L66 57L57 65L50 59L44 61L43 70H29L28 61L21 58L14 65L5 56L12 49L9 43L2 42V30L10 29L13 23L6 15L15 7L22 13L28 11Z" />
            <circle cx="36" cy="36" r="7.500" />
          </svg>
        </NavItem>
      </div>
      <SystemNav />
    </>
  );
}

/* ---------- message composer screen ---------- */

const Key = ({ children, className = "bg-white", w = "w-[92px]" }) => (
  <div className={"flex items-center justify-center rounded-[17px] text-black shadow-[0_3px_0_#a9abae] " + w + " " + className}>{children}</div>
);
const KeyRow = ({ keys, className }) => (
  <div className={"flex justify-center gap-[14.800px] text-[69px] leading-none " + className}>
    {keys.split("").map((k) => <Key key={k}>{k}</Key>)}
  </div>
);

const Keyboard = () => (
  <div className="flex h-[869px] shrink-0 flex-col bg-[#e8e9ee] text-[#47484b] shadow-[0_-4px_8px_rgba(0,0,0,0.05)]">
    <div className="flex h-[150px] items-center pb-[18px] pl-[30px]">
      <div className="mt-[6px] flex h-[90px] w-[90px] items-center justify-center rounded-full bg-white shadow-[0_3px_3px_rgba(0,0,0,0.25)]">
        <svg width="22" height="36" viewBox="0 0 22 36" fill="none" stroke="#5c5d60" strokeWidth="5"><path d="M2 2L18 18L2 34" /></svg>
      </div>
      <div className="w-[263px] text-center text-[52px]"><span className="pr-[6px]">KY</span></div>
      <div className="h-[71px] w-[2.500px] bg-[#c4c5ca]" />
      <div className="w-[304px] text-center text-[52px]">KYO</div>
      <div className="h-[71px] w-[2.500px] bg-[#c4c5ca]" />
      <div className="w-[272px] text-center text-[52px]">KEY</div>
      <svg className="ml-[36px]" width="42" height="58" viewBox="0 0 42 58" fill="none" stroke="currentColor" strokeWidth="5">
        <rect x="12" y="0" width="18" height="37" rx="9" fill="currentColor" stroke="none" />
        <path d="M3 27Q3 45 21 45T39 27M21 45V58" />
      </svg>
    </div>
    <KeyRow keys="1234567890" className="h-[115px] [&>div]:pt-[4px]" />
    <KeyRow keys="qwertyuiop" className="mt-[20px] h-[122px] [&>div]:pb-[8px]" />
    <KeyRow keys="asdfghjkl" className="mt-[22px] h-[122px] [&>div]:pb-[8px]" />
    <div className="mt-[24px] flex h-[122px] justify-center gap-[14.800px] text-[69px] leading-none">
      <Key w="w-[146px]" className="bg-[#cbcdd6]">
        <svg width="68" height="66" viewBox="0 0 68 66" fill="none" stroke="#3f4043" strokeWidth="5.500" strokeLinejoin="round">
          <path d="M34 4L64 37H52V62H17V37H4Z" />
        </svg>
      </Key>
      {"zxcvbnm".split("").map((k) => <Key key={k} className="bg-white pb-[6px]">{k}</Key>)}
      <Key w="w-[146px]" className="bg-[#cbcdd6]">
        <svg width="76" height="60" viewBox="0 0 76 60" fill="none" stroke="#3f4043" strokeWidth="5.500" strokeLinejoin="round">
          <path d="M23 3H70Q73 3 73 6V54Q73 57 70 57H23L3 30ZM32 19L54 41M54 19L32 41" />
        </svg>
      </Key>
    </div>
    <div className="mt-[24px] flex h-[132px] justify-center gap-[14.800px] text-[69px] leading-none">
      <Key w="w-[146px]" className="bg-[#cbcdd6]"><span className="text-[44px] font-medium text-[#3f4043]">?123</span></Key>
      <Key className="bg-[#cbcdd6] pt-[38px] text-[56px]">,</Key>
      <Key>
        <svg width="60" height="60" viewBox="0 0 60 60" fill="none" stroke="#444548" strokeWidth="5.500">
          <circle cx="30" cy="30" r="27" />
          <path d="M18 38Q30 50 42 38" strokeWidth="5" />
          <circle cx="20" cy="24" r="4.500" fill="#444548" stroke="none" />
          <circle cx="40" cy="24" r="4.500" fill="#444548" stroke="none" />
        </svg>
      </Key>
      <Key w="w-[413px]" />
      <Key className="bg-[#cbcdd6] pt-[38px] text-[56px]">.</Key>
      <Key w="w-[146px]" className="bg-[#1f72e8]">
        <svg width="58" height="36" viewBox="0 0 58 36" fill="none" stroke="#fff" strokeWidth="6"><path d="M54 2V18H5M20 2L4 18L20 34" /></svg>
      </Key>
    </div>
  </div>
);

function ComposeScreen() {
  return (
    <div className="relative flex h-[2332px] w-[1080px] flex-col bg-white">
      <StatusBar className="h-[92px] text-black shadow-[inset_0_9px_8px_-3px_rgba(0,0,0,0.2)]" speed="3.00" level="81" pin={false} fill="bg-[#fbf1dc]" />
      <div className="flex h-[210px] shrink-0 items-center px-[73px] pt-[4px]">
        <div className="w-[250px] text-[42px] font-bold text-[#38c983]">Hủy</div>
        <div className="flex-1 whitespace-nowrap text-center text-[48px] font-bold text-black">Tin nhắn mới</div>
        <div className="w-[250px]" />
      </div>
      <div className="mx-[72px] flex h-[115px] shrink-0 items-center border-b-[3px] border-[#ededed] pb-[13px] text-[42px]">
        <span className="text-[#636363]">Đến:</span>
        <span className="ml-[13px] text-[#4cc38a]">0767464910</span>
        <svg className="ml-auto mr-[5px]" width="56" height="53" viewBox="0 0 56 53" fill="none" stroke="#3fc586" strokeWidth="4">
          <path d="M33 22Q37 14 36 10Q33 2 25 2T14 10Q13 16 17 22Q23 30 17 36Q3 40 2 46V51H28" />
          <circle cx="41" cy="39" r="12.500" />
          <path d="M41 32V46M34 39H48" />
        </svg>
      </div>
      <div className="grow" />
      <div className="mx-[72px] mb-[46px] flex h-[139px] shrink-0 items-center rounded-[38px] bg-[#f1f1f1] pl-[45px] pr-[36px]">
        <svg width="48" height="48" viewBox="0 0 48 48" stroke="#000" strokeWidth="4.500"><path d="M0 24H48M24 0V48" /></svg>
        <span className="ml-[45px] border-b-[2.500px] border-black text-[44px] leading-[46px] text-black">KY</span>
        <div className="ml-auto flex gap-[29px]">
          <div className="mt-[6px] flex h-[72px] w-[72px] items-center justify-center rounded-full bg-[#2fcf82]">
            <svg width="34" height="38" viewBox="0 0 34 38" fill="none" stroke="#fff" strokeWidth="4"><path d="M2 2H23L32 11V36H2ZM13 13L18 11V27" /></svg>
          </div>
          <div className="mt-[6px] flex h-[72px] w-[72px] items-center justify-center rounded-full bg-[#2fcf82]">
            <svg width="32" height="38" viewBox="0 0 32 38" fill="none" stroke="#fff" strokeWidth="4"><path d="M16 38V3M1 17L16 2L31 17" /></svg>
          </div>
        </div>
      </div>
      <Keyboard />
      <SystemNav />
      <Badge className="absolute left-[879px] top-[1043px] h-[119px] w-[119px] text-[88px]">4</Badge>
      <div className="absolute left-[880px] top-[1166px] h-[123px] w-[116px] border-[6.200px] border-[#455dfc] shadow-[0_4px_5px_rgba(0,0,0,0.35),inset_0_4px_5px_rgba(0,0,0,0.25)]" />
    </div>
  );
}

/* ---------- page ---------- */

export default function App() {
  return (
    <div className="h-[1963px] w-[4096px] overflow-hidden bg-white">
      <div className="flex h-[2426px] w-[5063px] items-start bg-white pl-[33px] font-['Roboto',sans-serif] [zoom:0.809]">
        <div className="mt-[47px] w-[1088px] shrink-0 border-[3px] border-[#e8ac2c] bg-white pl-[3px] shadow-[0_6px_6px_rgba(0,0,0,0.2)]">
          <ListScreen />
        </div>

        <ArrowRight className="ml-[32px] mt-[1154px] shrink-0 overflow-visible drop-shadow-[0_4px_3px_rgba(0,0,0,0.35)]" />

        <div className="ml-[11px] mt-[47px] w-[1085px] shrink-0 border-[3px] border-[#e8ac2c] bg-white shadow-[0_6px_6px_rgba(0,0,0,0.2)]">
          <div className="relative flex h-[2335px] w-[1080px] flex-col">
            <TrackScreen seconds="9" bar="h-[93px] bg-[#095c9a] text-white shadow-[inset_0_6px_6px_rgba(0,0,0,0.2)]" speed="8.00" fill="bg-[#2f6f80]" />
            <Badge className="absolute left-[682px] top-[647px] h-[110px] w-[110px] pt-[2px] text-[80px]">2</Badge>
            <svg className="absolute left-[796px] top-[672px] overflow-visible drop-shadow-[0_4px_3px_rgba(0,0,0,0.35)]" width="156" height="84" viewBox="0 0 156 84" fill="#455dfc">
              <path d="M0 33H103L66 15L73 0L156 42L73 84L66 69L103 50H0Z" />
            </svg>
          </div>
        </div>

        <ArrowRight className="ml-[17px] mt-[1161px] shrink-0 overflow-visible drop-shadow-[0_4px_3px_rgba(0,0,0,0.35)]" />

        <div className="relative ml-[26px] mt-[48px] flex h-[2341px] w-[1080px] shrink-0 flex-col bg-white">
          <TrackScreen seconds="2" bar="relative z-10 h-[95px] bg-[#03253d] text-white" speed="12.0" fill="bg-[#22332f]" />
          <div className="absolute inset-0 bg-black/60" />
          <div className="absolute left-[75px] top-[915px] h-[472px] w-[930px] rounded-[6px] bg-white px-[74px] pt-[60px] shadow-[0_30px_50px_10px_rgba(0,0,0,0.35)]">
            <div className="text-[60px] font-bold leading-[72px] text-[#1f1f1f]">Khôi phục tắt máy</div>
            <div className="mt-[33px] text-[48px] leading-[57px] text-[#232323]">
              Thiết bị đang mất tín hiệu, bạn có
              <br />
              muốn gửi lệnh SOS ?
            </div>
            <div className="mt-[84px] flex items-center gap-[92px] pl-[115px] text-[42px] font-medium leading-[50px] text-[#0a6eb8]">
              <span>HỦY</span>
              <span className="whitespace-nowrap">SOS GỬI LỆNH KHẨN CẤP</span>
            </div>
          </div>
          <div className="absolute left-[423px] top-[1243px] h-[115px] w-[527px] border-[6.200px] border-[#455dfc] shadow-[0_5px_5px_rgba(0,0,0,0.35),inset_0_5px_5px_rgba(0,0,0,0.25)]" />
          <Badge className="absolute left-[632px] top-[1141px] h-[108px] w-[105px] pt-[2px] text-[80px]">3</Badge>
        </div>

        <ArrowRight className="ml-[35px] mt-[1168px] shrink-0 overflow-visible drop-shadow-[0_4px_3px_rgba(0,0,0,0.35)]" />

        <div className="ml-[19px] mt-[52px] w-[1085px] shrink-0 border-[3px] border-[#e8ac2c] bg-white shadow-[0_6px_6px_rgba(0,0,0,0.2)]">
          <ComposeScreen />
        </div>
      </div>
    </div>
  );
}
